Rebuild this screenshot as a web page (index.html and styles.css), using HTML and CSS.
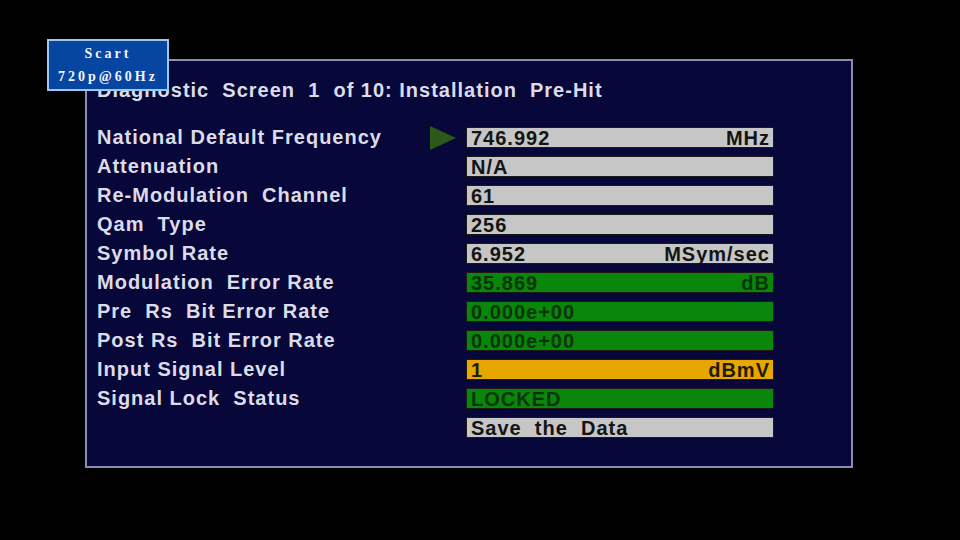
FILE: index.html
```html
<!DOCTYPE html>
<html lang="en">
<head>
    <meta charset="UTF-8">
    <title>Diagnostic Screen</title>
    <link rel="stylesheet" href="styles.css">
</head>
<body>
    <div class="badge">
        <div>Scart</div>
        <div>720p@60Hz</div>
    </div>
    <main class="panel">
        <h1 class="title">Diagnostic  Screen  1  of 10: Installation  Pre-Hit</h1>
        <div class="rows">
            <div class="row">
                <span class="label">National Default Frequency</span>
                <span class="pointer"><svg width="26" height="24" viewBox="0 0 26 24"><polygon points="0,0 26,12 0,24" fill="#2b5a18"/></svg></span>
                <span class="field gray"><span>746.992</span><span>MHz</span></span>
            </div>
            <div class="row">
                <span class="label">Attenuation</span>
                <span class="pointer"></span>
                <span class="field gray"><span>N/A</span></span>
            </div>
            <div class="row">
                <span class="label">Re-Modulation  Channel</span>
                <span class="pointer"></span>
                <span class="field gray"><span>61</span></span>
            </div>
            <div class="row">
                <span class="label">Qam  Type</span>
                <span class="pointer"></span>
                <span class="field gray"><span>256</span></span>
            </div>
            <div class="row">
                <span class="label">Symbol Rate</span>
                <span class="pointer"></span>
                <span class="field gray"><span>6.952</span><span>MSym/sec</span></span>
            </div>
            <div class="row">
                <span class="label">Modulation  Error Rate</span>
                <span class="pointer"></span>
                <span class="field green"><span>35.869</span><span>dB</span></span>
            </div>
            <div class="row">
                <span class="label">Pre  Rs  Bit Error Rate</span>
                <span class="pointer"></span>
                <span class="field green"><span>0.000e+00</span></span>
            </div>
            <div class="row">
                <span class="label">Post Rs  Bit Error Rate</span>
                <span class="pointer"></span>
                <span class="field green"><span>0.000e+00</span></span>
            </div>
            <div class="row">
                <span class="label">Input Signal Level</span>
                <span class="pointer"></span>
                <span class="field orange"><span>1</span><span>dBmV</span></span>
            </div>
            <div class="row">
                <span class="label">Signal Lock  Status</span>
                <span class="pointer"></span>
                <span class="field green"><span>LOCKED</span></span>
            </div>
            <div class="row">
                <span class="label"></span>
                <span class="pointer"></span>
                <span class="field gray"><span>Save  the  Data</span></span>
            </div>
        </div>
    </main>
</body>
</html>
```
FILE: styles.css
```css
body {
    margin: 0;
    padding: 59px 0 0 85px;
    background: #000;
    font-family: "Liberation Sans", Arial, sans-serif;
    font-weight: bold;
    width: 960px;
    height: 540px;
    box-sizing: border-box;
    overflow: hidden;
}

.badge {
    position: absolute;
    left: 47px;
    top: 39px;
    width: 122px;
    height: 52px;
    box-sizing: border-box;
    background: #0645a0;
    border: 2px solid #9cc8f0;
    color: #f4f4ff;
    font-family: "Liberation Serif", "Times New Roman", serif;
    font-size: 14px;
    letter-spacing: 3px;
    text-align: center;
    display: flex;
    flex-direction: column;
    justify-content: center;
    gap: 6px;
    line-height: 17px;
    z-index: 2;
}

.panel {
    width: 768px;
    height: 409px;
    box-sizing: border-box;
    background: #07073a;
    border: 2px solid #8a8eb4;
    padding: 15px 0 0 10px;
}

.title {
    margin: 0 0 18px;
    font-size: 20px;
    letter-spacing: 1px;
    line-height: 29px;
    color: #dcdce8;
    white-space: pre;
}

.rows {
    display: flex;
    flex-direction: column;
}

.row {
    display: grid;
    grid-template-columns: 333px 36px 308px;
    align-items: center;
    height: 29px;
}

.label {
    font-size: 20px;
    letter-spacing: 1px;
    color: #dcdce8;
    white-space: pre;
}

.pointer {
    display: flex;
    align-items: center;
}

.field {
    display: flex;
    justify-content: space-between;
    height: 21px;
    box-sizing: border-box;
    padding: 0 3px 0 4px;
    font-size: 20px;
    letter-spacing: 1px;
    line-height: 20px;
    white-space: pre;
    border: 1px solid #1a1a1a;
}

.gray {
    background: #c6c6c6;
    color: #141414;
}

.green {
    background: #0a870a;
    color: #083508;
}

.orange {
    background: #e6a800;
    color: #231a00;
}
```
